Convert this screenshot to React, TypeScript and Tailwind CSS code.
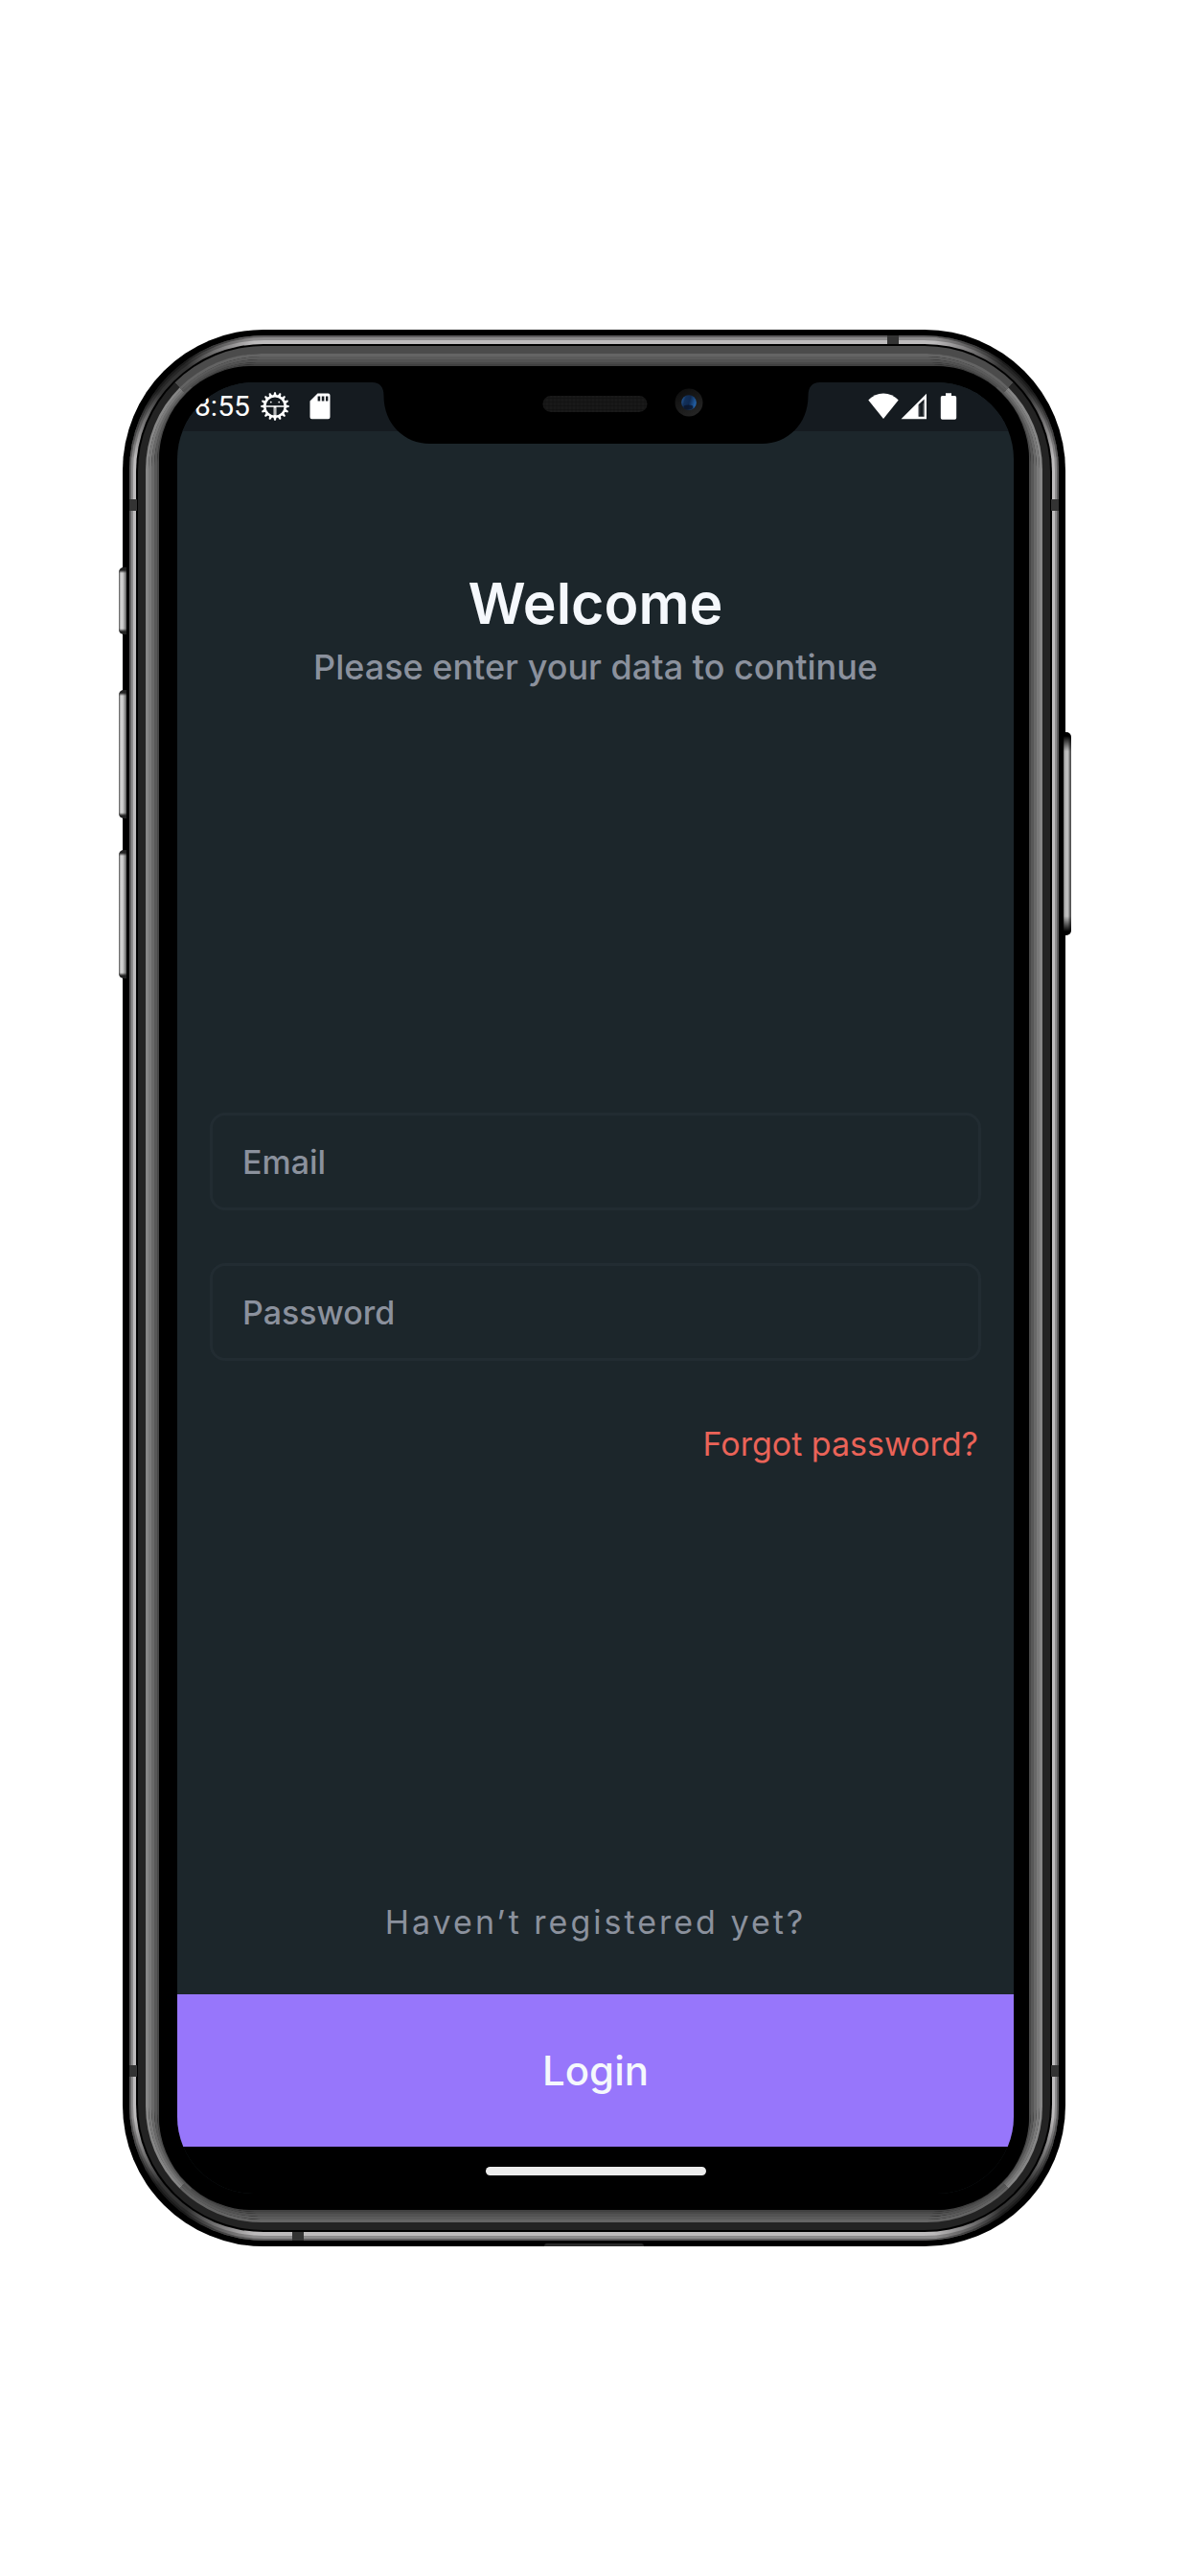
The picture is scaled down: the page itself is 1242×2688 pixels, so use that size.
import React from "react";

const TEETH = Array.from({ length: 16 }, (_, i) => i * 22.5);

function DebugIcon() {
  return (
    <svg className="size-8" viewBox="0 0 32 32" fill="none" aria-hidden="true">
      {TEETH.map((angle) => (
        <path
          key={angle}
          d="M14.2 5L15.2 1.2H16.8L17.8 5Z"
          fill="#fff"
          transform={`rotate(${angle} 16 16)`}
        />
      ))}
      <circle cx="16" cy="16" r="10.7" stroke="#fff" strokeWidth="2.4" />
      <path d="M6 16H26" stroke="#fff" strokeWidth="1.4" />
      <path d="M16 16V26" stroke="#fff" strokeWidth="2.8" />
      <path d="M16 17.5V25" stroke="#151b20" strokeWidth="0.6" />
      <circle cx="11.8" cy="11.6" r="0.9" fill="#fff" />
      <circle cx="20.2" cy="11.6" r="0.9" fill="#fff" />
    </svg>
  );
}

function SdCardIcon() {
  return (
    <svg className="h-7 w-[22px]" viewBox="0 0 22 28" aria-hidden="true">
      <path
        fillRule="evenodd"
        fill="#fff"
        d="M8.5 0.5H19.5Q21.5 0.5 21.5 2.5V25.2Q21.5 27.2 19.5 27.2H2.5Q0.5 27.2 0.5 25.2V8.5ZM8.6 3.4V8.4H11.2V3.4ZM12.8 3.4V8.4H15.4V3.4ZM17 3.4V8.4H19.4V3.4Z"
      />
    </svg>
  );
}

function WifiIcon() {
  return (
    <svg className="h-7 w-8" viewBox="0 0 32 28" aria-hidden="true">
      <path fill="#fff" d="M0.3 7.6Q7 0.4 16 0.4Q25 0.4 31.7 7.6L16 27Z" />
    </svg>
  );
}

function SignalIcon() {
  return (
    <svg className="h-7 w-7" viewBox="0 0 28 28" aria-hidden="true">
      <path
        fill="#fff"
        fillRule="evenodd"
        d="M0.5 27.3L27 0.8V27.3ZM18.6 12.2V24.7H24.6V6.4Z"
      />
      <path fill="#fff" d="M20.2 13V23.6H19.4V12.6ZM23.2 23.6V11H24.2V23.6Z" opacity="0.25" />
    </svg>
  );
}

function BatteryIcon() {
  return (
    <svg className="h-7 w-[18px]" viewBox="0 0 18 28" aria-hidden="true">
      <path
        fill="#fff"
        d="M6 0.3H12V3H15.5Q17.2 3 17.2 4.7V26Q17.2 27.7 15.5 27.7H2.5Q0.8 27.7 0.8 26V4.7Q0.8 3 2.5 3H6Z"
      />
    </svg>
  );
}

function Notch() {
  return (
    <svg
      className="absolute top-0 left-1/2 h-16 w-[467px] -translate-x-1/2"
      viewBox="0 0 467 64"
      aria-hidden="true"
    >
      <defs>
        <pattern id="mesh" width="4" height="4" patternUnits="userSpaceOnUse">
          <rect width="4" height="4" fill="#191919" />
          <path d="M0 0H4M0 0V4" stroke="#0d0d0d" />
        </pattern>
        <linearGradient id="lensRing" x1="0" y1="0" x2="0.6" y2="1">
          <stop offset="0" stopColor="#0b0b0b" />
          <stop offset="1" stopColor="#242424" />
        </linearGradient>
        <linearGradient id="lens" x1="0" y1="0.2" x2="1" y2="0.5">
          <stop offset="0" stopColor="#2a62a5" />
          <stop offset="0.25" stopColor="#123059" />
          <stop offset="0.55" stopColor="#0f2950" />
          <stop offset="1" stopColor="#2465ad" />
        </linearGradient>
      </defs>
      <path d="M0 0C8 0 12 5 12 14C12 44 34 64 60 64H407C433 64 455 44 455 14C455 5 459 0 467 0Z" fill="#000" />
      <rect x="178" y="14" width="109" height="17" rx="8.5" fill="url(#mesh)" />
      <circle cx="330.5" cy="21" r="14.5" fill="url(#lensRing)" />
      <circle cx="330.5" cy="21" r="7.8" fill="url(#lens)" />
      <ellipse cx="330" cy="26" rx="5" ry="2.4" fill="#0a1428" opacity="0.8" />
    </svg>
  );
}

const SIDE_BUTTON =
  "absolute z-10 w-2 rounded-l-[5px] bg-[linear-gradient(to_bottom,#222_3px,transparent_6px,transparent_calc(100%-6px),#222_calc(100%-3px)),linear-gradient(to_right,#444_0,#999_1px,#d0d0d0_2px,#cfcfcf_4px,#999_6px,#555)]";

function PhoneFrame({ children }: { children: React.ReactNode }) {
  return (
    <div className="relative w-full">
      <span className={`${SIDE_BUTTON} top-[248px] -left-1 h-[70px]`} />
      <span className={`${SIDE_BUTTON} top-[376px] -left-1 h-[134px]`} />
      <span className={`${SIDE_BUTTON} top-[543px] -left-1 h-[134px]`} />
      <span className="absolute top-[420px] -right-1.5 z-10 h-[212px] w-2 rounded-r-[5px] bg-[linear-gradient(to_bottom,#000_4px,transparent_20px,transparent_calc(100%-20px),#000_calc(100%-4px)),linear-gradient(to_right,#777_0,#bdbdbd_2px,#bdbdbd_5px,#777_6px,#444)]" />

      <div className="relative rounded-[147px] bg-black px-[7px] py-1.5">
        {/* polished steel band, darker round the corners */}
        <div className="relative rounded-[141px] bg-[#bdbbbc] bg-[radial-gradient(circle_at_42px_42px,#333_20px,transparent_95px),radial-gradient(circle_at_calc(100%-42px)_42px,#333_20px,transparent_95px),radial-gradient(circle_at_42px_calc(100%-42px),#333_20px,transparent_95px),radial-gradient(circle_at_calc(100%-42px)_calc(100%-42px),#333_20px,transparent_95px)]">
          <span className="absolute top-0 right-[167px] h-[9px] w-3 bg-[#333]" />
          <span className="absolute bottom-0 left-[170px] h-[9px] w-3 bg-[#333]" />
          <span className="absolute top-[171px] left-0 h-3 w-2 bg-[#333]" />
          <span className="absolute top-[171px] right-0 h-3 w-2 bg-[#333]" />
          <span className="absolute bottom-[171px] left-0 h-3 w-2 bg-[#333]" />
          <span className="absolute right-0 bottom-[171px] h-3 w-2 bg-[#333]" />
          <div className="rounded-[141px] border-2 border-black/50">
            <div className="rounded-[139px] border-x-2 border-y-3 border-black/25">
              <div className="rounded-[137px] border-x-3 border-y-4 border-transparent">
                <div className="rounded-[133px] bg-black p-0.5">
                  <div className="rounded-[131px] border-8 border-[#232323] border-t-[#4b4b4b] bg-[#232323]">
                    <div className="rounded-[121px] border-3 border-x-[#868686] border-y-[#646464] bg-black">
                      <div className="rounded-[117px] border-3 border-x-[#7a7a7a] border-y-[#5b5b5b]">
                        <div className="rounded-[112px] border-3 border-x-[#696969] border-y-[#525252]">
                          <div className="rounded-[107px] border-x-3 border-y-2 border-x-[#585858] border-y-[#494949]">
                            <div className="rounded-[102px] border-2 border-x-[#474747] border-y-[#404040]">
                              <div className="rounded-[97px] bg-black py-[17px] pr-4 pl-[19px]">{children}</div>
                            </div>
                          </div>
                        </div>
                      </div>
                    </div>
                  </div>
                </div>
              </div>
            </div>
          </div>
        </div>
        <span className="absolute bottom-0 left-1/2 h-[3px] w-[104px] -translate-x-1/2 rounded-t-sm bg-[#2a2a2a]" />
      </div>
    </div>
  );
}

const FIELD =
  "h-[102px] w-full rounded-2xl border-3 border-[#222c32] bg-transparent px-[31px] text-[34px] font-medium text-[#f5f8fc] outline-none placeholder:text-[#8b919d] placeholder:opacity-100";

export default function App() {
  return (
    <div className="min-h-screen bg-white pt-[344px] pr-[130px] pb-32 pl-32 font-['Inter','Liberation_Sans',sans-serif]">
      <PhoneFrame>
        <div className="relative flex flex-col overflow-hidden rounded-[80px] bg-[#1c262b]">
          <header className="flex h-[51px] items-center bg-[#151b20] pr-[59px] pb-0.5 pl-[18px] text-white">
            <time className="font-['Roboto',sans-serif] text-[30px] leading-[50px]">8:55</time>
            <span className="ml-2.5">
              <DebugIcon />
            </span>
            <span className="ml-5">
              <SdCardIcon />
            </span>
            <span className="ml-auto flex items-center">
              <WifiIcon />
              <span className="ml-0.5">
                <SignalIcon />
              </span>
              <span className="ml-[13px]">
                <BatteryIcon />
              </span>
            </span>
          </header>

          <main>
            <div className="pt-36 text-center">
              <h1 className="text-[59px] leading-[72px] font-semibold text-[#f5f8fc]">Welcome</h1>
              <p className="text-[36px] leading-[60px] font-medium text-[#8b919d]">
                Please enter your data to continue
              </p>
            </div>

            <form onSubmit={(e) => e.preventDefault()}>
              <div className="mt-[435px] flex flex-col gap-[55px] px-[34px]">
                <input className={FIELD} type="email" aria-label="Email" placeholder="Email" />
                <input className={FIELD} type="password" aria-label="Password" placeholder="Password" />
              </div>
              <div className="mt-[63px] flex justify-end px-[37px]">
                <a href="#forgot" className="text-[34px] leading-[48px] text-[#ea6358]">
                  Forgot password?
                </a>
              </div>
              <div className="mt-[451px] flex justify-center">
                <a href="#register" className="text-[34px] leading-[48px] tracking-[3px] text-[#8b919d]">
                  Haven’t registered yet?
                </a>
              </div>
              <button
                type="submit"
                className="mt-[51px] block h-[159px] w-full bg-[#9776fb] text-[42px] font-medium text-[#f5f8fc]"
              >
                Login
              </button>
            </form>
          </main>

          <footer className="flex h-[49px] justify-center bg-black pt-[21px]">
            <span className="h-[9px] w-[230px] rounded-full bg-[#ececec]" />
          </footer>
          <Notch />
        </div>
      </PhoneFrame>
    </div>
  );
}
